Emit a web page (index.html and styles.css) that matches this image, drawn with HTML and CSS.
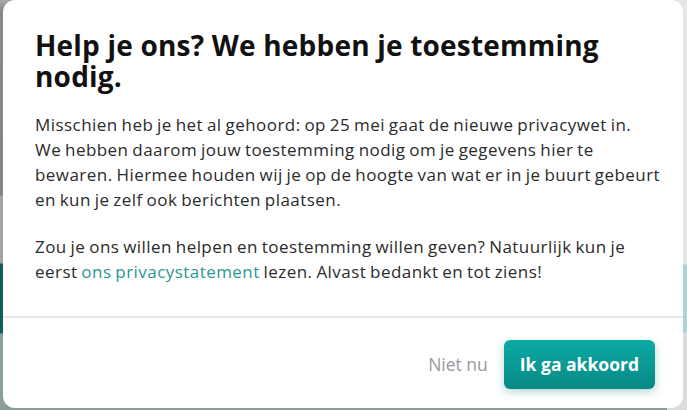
FILE: index.html
```html
<!DOCTYPE html>
<html lang="nl">
<head>
<meta charset="utf-8">
<title>Toestemming</title>
<link rel="stylesheet" href="styles.css">
</head>
<body>
<div class="backdrop">
  <div class="modal">
    <div class="modal-body">
      <h1 class="title">Help je ons? We hebben je toestemming nodig.</h1>
      <p class="text">Misschien heb je het al gehoord: op 25 mei gaat de nieuwe privacywet in.<br>We hebben daarom jouw toestemming nodig om je gegevens hier te<br>bewaren. Hiermee houden wij je op de hoogte van wat er in je buurt gebeurt<br>en kun je zelf ook berichten plaatsen.</p>
      <p class="text">Zou je ons willen helpen en toestemming willen geven? Natuurlijk kun je<br>eerst <a class="link" href="#">ons privacystatement</a> lezen. Alvast bedankt en tot ziens!</p>
    </div>
    <div class="modal-footer">
      <button class="btn-secondary">Niet nu</button>
      <button class="btn-primary">Ik ga akkoord</button>
    </div>
  </div>
</div>
</body>
</html>
```
FILE: styles.css
```css
* { box-sizing: border-box; }
html, body { margin: 0; padding: 0; }
body {
  width: 687px;
  height: 410px;
  overflow: hidden;
  font-family: "Open Sans", "Noto Sans", sans-serif;
  background:
    linear-gradient(to bottom,
      #e6e6e6 0px, #e6e6e6 264px,
      #a9d6d4 265px, #a9d6d4 332px,
      #dcdcdc 333px, #dcdcdc 410px) right top / 20px 100% no-repeat,
    linear-gradient(to bottom,
      #a8a8a8 0px, #8a8a8a 10px, #858585 195px,
      #a3a3a3 196px, #a3a3a3 263px,
      #0e5f5c 264px, #0e5f5c 333px,
      #8d9d9c 334px, #8d9d9c 410px);
}
.backdrop {
  height: 410px;
  padding: 0 4px 2px 3px;
  display: flex;
}
.modal {
  flex: 1;
  background: #fff;
  border-radius: 12px;
  display: flex;
  flex-direction: column;
  overflow: hidden;
}
.modal-body {
  padding: 30px 8px 0 32px;
  flex: 1;
  border-bottom: 2px solid #e6e6e6;
}
.title {
  margin: 0 0 20px 0;
  font-size: 28px;
  line-height: 31px;
  font-weight: 700;
  color: #111;
  letter-spacing: 0.2px;
  width: 600px;
}
.text {
  margin: 0 0 22px 0;
  font-size: 17px;
  line-height: 25px;
  color: #2b2b2b;
  letter-spacing: 0.45px;
  word-spacing: -1px;
  white-space: nowrap;
}
.link {
  color: #2a9792;
  text-decoration: none;
}
.modal-footer {
  height: 90px;
  display: flex;
  align-items: center;
  justify-content: flex-end;
  gap: 16px;
  padding: 2px 28px 0 0;
}
.btn-secondary {
  background: none;
  border: none;
  font-family: inherit;
  font-size: 17.5px;
  color: #9a9a9a;
  padding: 0;
}
.btn-primary {
  font-family: inherit;
  font-size: 17.5px;
  font-weight: 700;
  color: #fff;
  border: none;
  border-radius: 6px;
  height: 49px;
  padding: 0 16px;
  background: linear-gradient(to bottom, #0caaa4, #078985);
  box-shadow: 0 3px 8px rgba(0, 120, 115, 0.3);
}
```
